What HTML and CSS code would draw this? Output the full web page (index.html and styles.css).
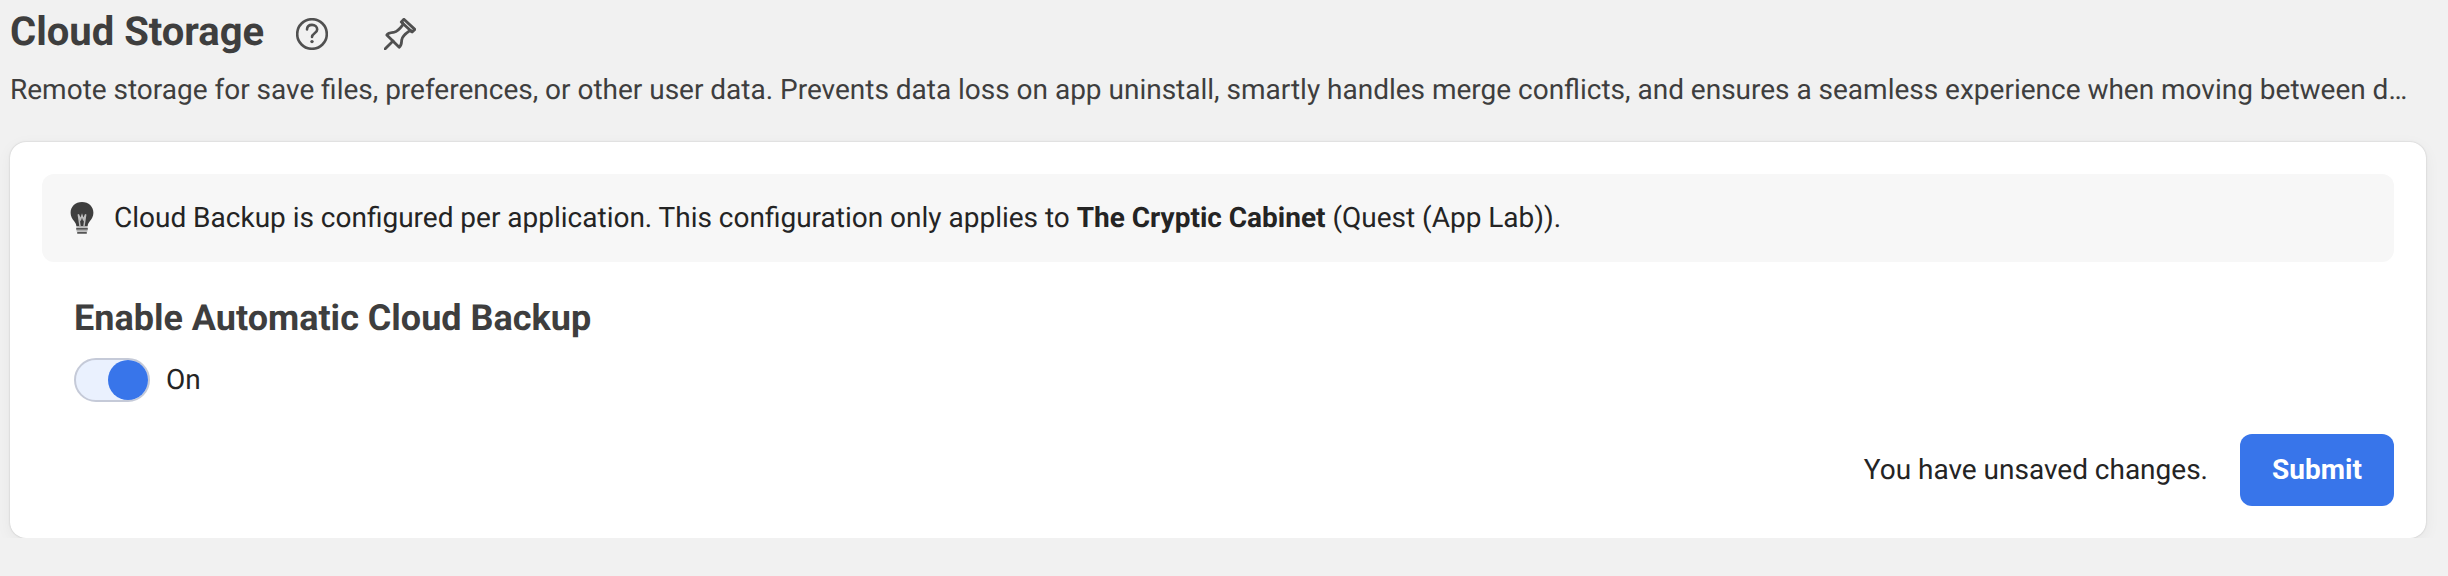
FILE: index.html
```html
<!DOCTYPE html>
<html lang="en">
<head>
<meta charset="utf-8">
<title>Cloud Storage</title>
<link rel="stylesheet" href="styles.css">
</head>
<body>
<main class="page">
  <header class="header">
    <h1 class="title">Cloud Storage</h1>
    <svg class="icon help" viewBox="0 0 32 32" fill="none" stroke="currentColor" stroke-width="2.6" stroke-linecap="round" stroke-linejoin="round">
      <circle cx="16" cy="16" r="14.8"/>
      <path d="M11 11.400C11.200 8.300 13.200 6.900 16 6.900c3.100 0 5.200 1.800 5.200 4.500 0 3.900-5.200 3.700-5.200 7.600"/>
      <circle cx="16" cy="23.600" r="1.700" fill="currentColor" stroke="none"/>
    </svg>
    <svg class="icon pin" viewBox="0 0 32 32" fill="none" stroke="currentColor" stroke-width="2.800" stroke-linecap="round" stroke-linejoin="round">
      <path d="M17.300 3.900 19.900 1.300 30.800 11.400 28.100 14.100Z"/>
      <path d="M18.800 5.100 18.600 7.200C16.200 10.400 13.500 13.700 10.300 14.200 7.800 14.500 4.300 14.500 2.800 16.900L15.200 29.200C17.800 27.600 17.400 24.700 17.700 22 18.200 18.600 21.500 15.700 25.100 13.200L27.200 13"/>
      <path d="M9 23 .8 31.200"/>
    </svg>
  </header>
  <p class="description">Remote storage for save files, preferences, or other user data. Prevents data loss on app uninstall, smartly handles merge conflicts, and ensures a seamless experience when moving between d…</p>
  <section class="card">
    <div class="notice">
      <svg class="bulb" viewBox="0 0 24 32">
        <path fill="#3e3e3e" d="M12 0C5.300 0 .6 4.700.6 10.700c0 3.800 1.700 6 3.600 8.500 1.200 1.600 2 3 2.200 5h11.200c.2-2 1-3.400 2.200-5 1.900-2.500 3.600-4.700 3.600-8.500C23.400 4.700 18.700 0 12 0Z"/>
        <path fill="none" stroke="#bdbdbd" stroke-width="1.500" d="M10 24 8.300 12.400 10.600 17.500 12 13.500 13.400 17.500 15.700 12.400 14 24"/>
        <path fill="none" stroke="#555" stroke-width="2" d="M6.200 26.700h11.600M7.200 30.800h9.600"/>
        <path stroke="#b0b0b0" stroke-width="1.400" d="M6.700 24.700h10.600M6.500 28.800h11"/>
      </svg>
      <p class="notice-text">Cloud Backup is configured per application. This configuration only applies to <strong>The Cryptic Cabinet</strong> (Quest (App Lab)).</p>
    </div>
    <div class="setting">
      <h2 class="setting-title">Enable Automatic Cloud Backup</h2>
      <div class="toggle-row">
        <span class="toggle" role="switch" aria-checked="true"><span class="knob"></span></span>
        <span>On</span>
      </div>
    </div>
    <footer class="actions">
      <span>You have unsaved changes.</span>
      <button class="submit" type="button">Submit</button>
    </footer>
  </section>
</main>
</body>
</html>
```
FILE: styles.css
```css
* { box-sizing: border-box; }
body {
  margin: 0;
  background: #f1f1f1;
  color: #242424;
  font: 28px/40px Roboto, sans-serif;
  text-rendering: geometricPrecision;
  word-spacing: -.06px;
}
h1, h2, p { margin: 0; }
.page { padding: 8px 22px 0 10px; }
.header { display: flex; align-items: center; height: 48px; }
.title { color: #3e3e3e; font-size: 40px; line-height: 48px; font-weight: 700; }
.icon { width: 32px; height: 32px; color: #505050; overflow: hidden; margin-top: 4px; }
.help { margin-left: 32px; }
.pin { margin-left: 56px; }
.description {
  margin-top: 14px;
  color: #3e3e3e;
  white-space: nowrap;
}
.card {
  margin-top: 32px;
  height: 396px;
  padding: 32px;
  background: #fff;
  border-radius: 16px;
  box-shadow: 0 0 2px rgba(0, 0, 0, .2), 0 4px 16px rgba(0, 0, 0, .05);
}
.notice {
  display: flex;
  align-items: center;
  height: 88px;
  padding: 0 28px;
  background: #f7f7f7;
  border-radius: 12px;
}
.bulb { width: 24px; height: 32px; margin-right: 20px; }
.setting { padding: 34px 32px 0; }
.setting-title { color: #3e3e3e; font-size: 36px; line-height: 44px; font-weight: 700; }
.toggle-row { display: flex; align-items: center; gap: 16px; margin-top: 18px; }
.toggle {
  display: flex;
  justify-content: flex-end;
  width: 76px;
  height: 44px;
  border: 2px solid #c5cad8;
  border-radius: 22px;
  background: #eaf1fe;
}
.knob { width: 40px; height: 40px; border-radius: 50%; background: #3875ea; }
.actions { display: flex; justify-content: flex-end; align-items: center; gap: 32px; margin-top: 32px; }
.submit {
  width: 154px;
  height: 72px;
  padding: 0;
  border: 0;
  border-radius: 12px;
  background: #3875ea;
  color: #fff;
  font: 700 28px/40px Roboto, sans-serif;
}
```
